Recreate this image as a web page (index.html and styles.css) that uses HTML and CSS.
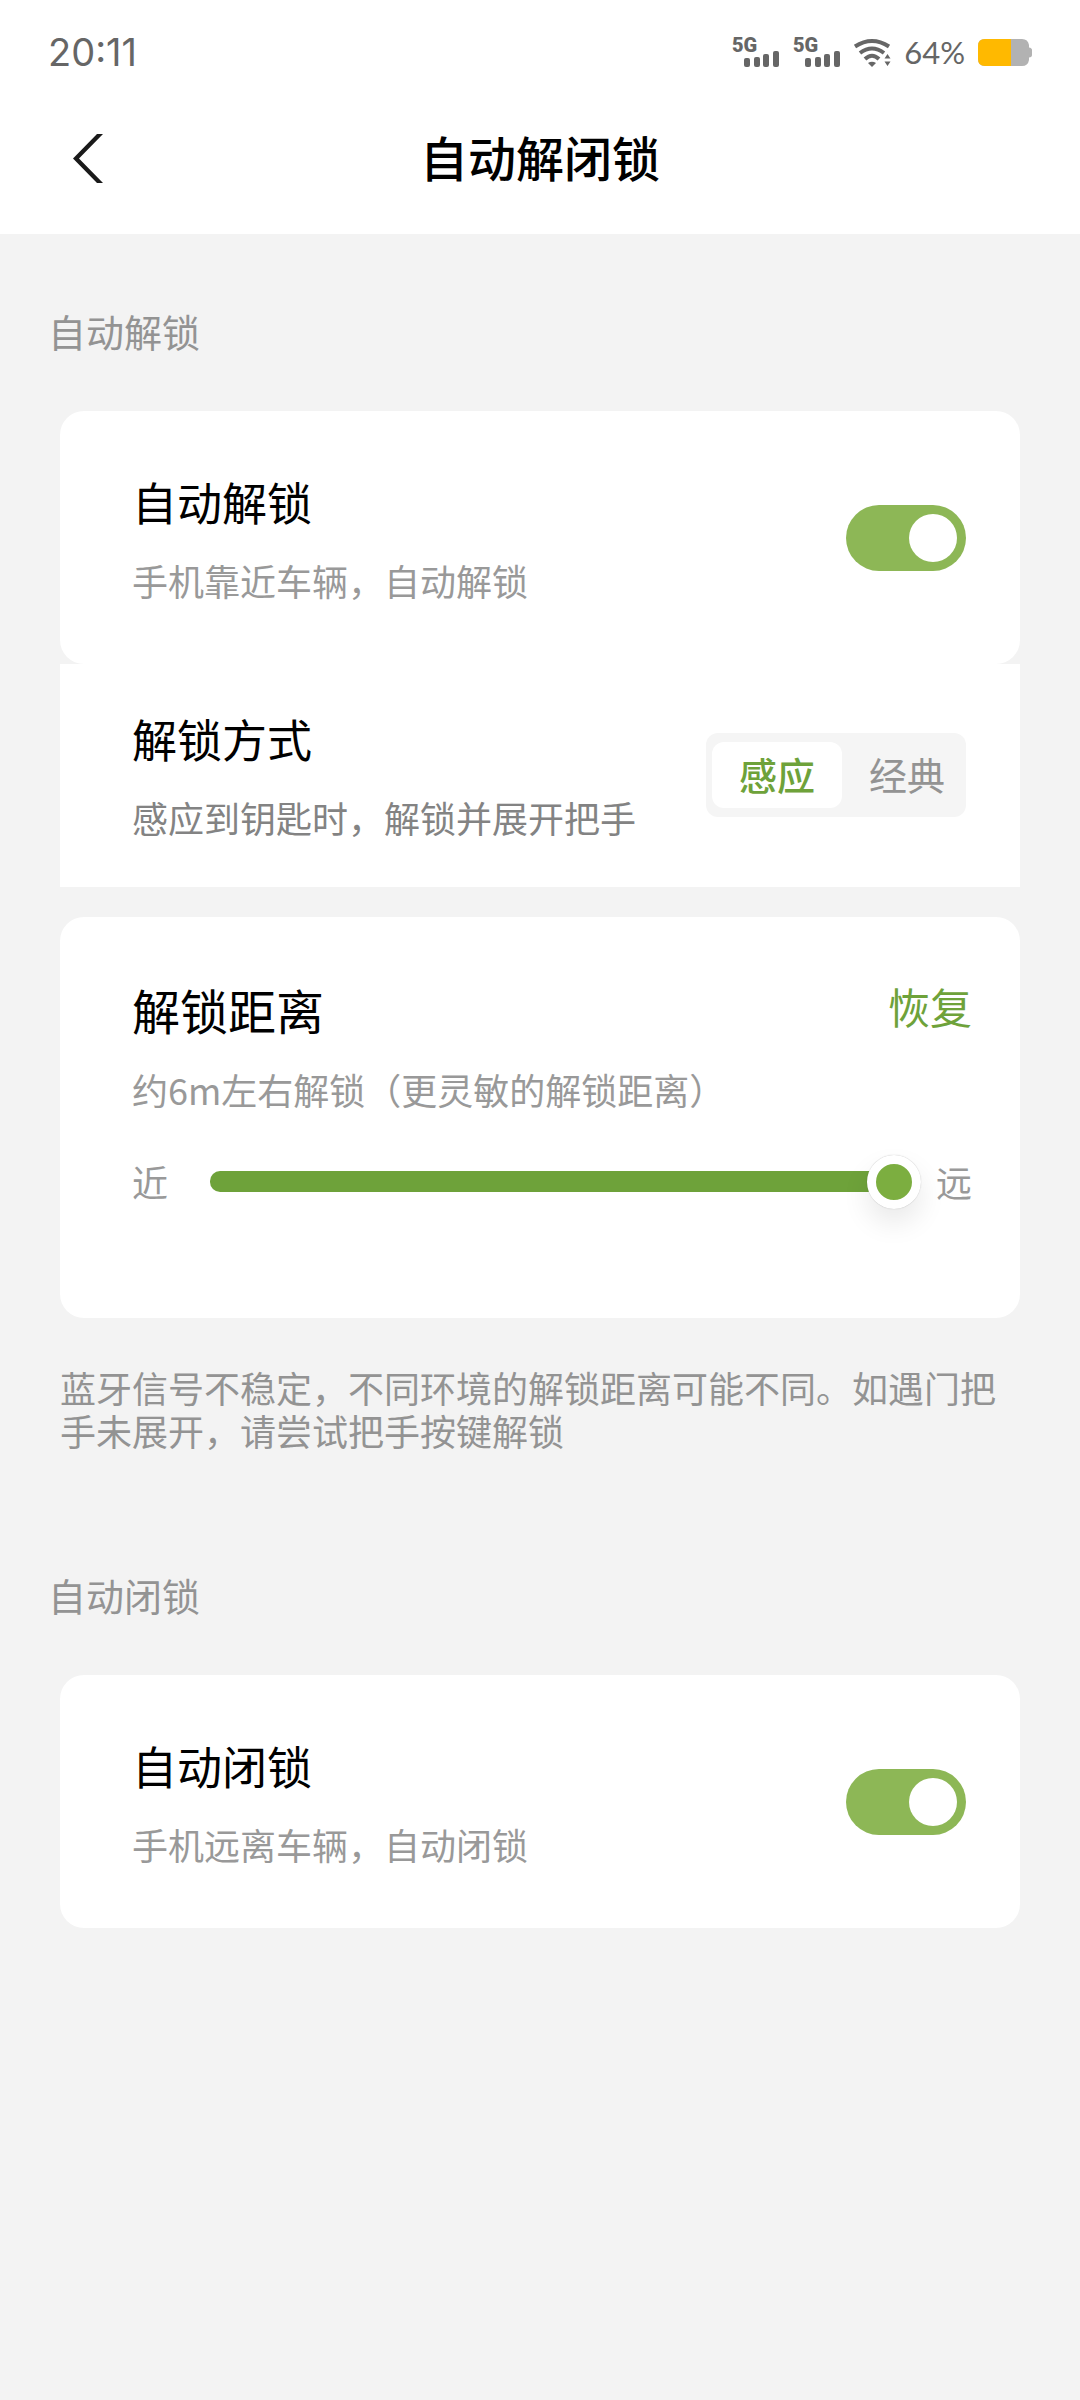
FILE: index.html
```html
<!DOCTYPE html>
<html lang="zh-CN">
<head>
    <meta charset="UTF-8">
    <meta name="viewport" content="width=device-width, initial-scale=1.0">
    <title>自动解闭锁</title>
    <link rel="stylesheet" href="styles.css">
</head>
<body>

<header class="top">
    <div class="status-bar">
        <span class="clock">20:11</span>
        <div class="status-icons">
            <svg class="signal" viewBox="0 0 48 36" width="48" height="36" role="img" aria-label="5G">
                <text class="signal-text" x="1" y="18">5G</text>
                <rect x="13" y="24" width="6" height="9" rx="2"/>
                <rect x="23" y="23" width="6" height="10" rx="2"/>
                <rect x="32" y="20" width="6" height="13" rx="2"/>
                <rect x="42" y="17" width="6" height="16" rx="2"/>
            </svg>
            <svg class="signal" viewBox="0 0 48 36" width="48" height="36" role="img" aria-label="5G">
                <text class="signal-text" x="1" y="18">5G</text>
                <rect x="13" y="24" width="6" height="9" rx="2"/>
                <rect x="23" y="23" width="6" height="10" rx="2"/>
                <rect x="32" y="20" width="6" height="13" rx="2"/>
                <rect x="42" y="17" width="6" height="16" rx="2"/>
            </svg>
            <svg class="wifi" viewBox="0 0 38 30" width="38" height="30" role="img" aria-label="Wi-Fi">
                <g fill="none" stroke="#666666" stroke-width="4">
                    <path d="M2 9.500Q19 -1.500 36 9.500"/>
                    <path d="M7 16Q19 7 31 16"/>
                    <path d="M12 22Q19 15.500 26 22"/>
                </g>
                <path d="M15 26Q19 23.500 23 26L19 30Z" fill="#666666"/>
                <path d="M31.500 21.500L34.500 17L37.500 21.500ZM31.500 24.500L34.500 29L37.500 24.500Z" fill="#666666"/>
            </svg>
            <span class="battery-level">64%</span>
            <svg class="battery" viewBox="0 0 54 27" width="54" height="27" role="img" aria-label="电量">
                <path d="M7 0H44Q50 0 51 6V8.500Q54 9 54 11V16Q54 18 51 18.500V21Q50 27 44 27H7Q0 27 0 20V7Q0 0 7 0Z" fill="#b2b2b2"/>
                <path d="M7 0H33V27H7Q0 27 0 20V7Q0 0 7 0Z" fill="#ffb900"/>
            </svg>
        </div>
    </div>
    <div class="nav-bar">
        <button type="button" class="back-button" aria-label="返回">
            <svg viewBox="0 0 30 50" width="30" height="50">
                <path d="M24 0H30L6 24.500L30 49H24L0 24.500Z" fill="#1a1a1a"/>
            </svg>
        </button>
        <h1>自动解闭锁</h1>
    </div>
</header>

<main>
    <section>
        <h2>自动解锁</h2>

        <div class="card">
            <div class="card-text">
                <label class="card-title" for="auto-unlock">自动解锁</label>
                <p class="card-desc">手机靠近车辆，自动解锁</p>
            </div>
            <input type="checkbox" role="switch" class="switch" id="auto-unlock" checked>
        </div>

        <div class="card card-square">
            <div class="card-text">
                <h3 class="card-title">解锁方式</h3>
                <p class="card-desc card-desc-dark">感应到钥匙时，解锁并展开把手</p>
            </div>
            <div class="segmented" role="group" aria-label="解锁方式">
                <button type="button" class="segment active" aria-pressed="true">感应</button>
                <button type="button" class="segment" aria-pressed="false">经典</button>
            </div>
        </div>

        <div class="card card-distance">
            <div class="distance-header">
                <label class="card-title" for="distance">解锁距离</label>
                <button type="button" class="reset-button">恢复</button>
            </div>
            <p class="card-desc">约6m左右解锁（更灵敏的解锁距离）</p>
            <div class="slider-row">
                <span>近</span>
                <input type="range" class="slider" id="distance" min="1" max="6" value="6">
                <span>远</span>
            </div>
        </div>

        <p class="note">蓝牙信号不稳定，不同环境的解锁距离可能不同。如遇门把手未展开，请尝试把手按键解锁</p>
    </section>

    <section>
        <h2>自动闭锁</h2>

        <div class="card">
            <div class="card-text">
                <label class="card-title" for="auto-lock">自动闭锁</label>
                <p class="card-desc">手机远离车辆，自动闭锁</p>
            </div>
            <input type="checkbox" role="switch" class="switch" id="auto-lock" checked>
        </div>
    </section>
</main>

<script>
    document.querySelectorAll('.segment').forEach((button) => {
        button.addEventListener('click', () => {
            document.querySelectorAll('.segment').forEach((item) => {
                item.classList.toggle('active', item === button);
                item.setAttribute('aria-pressed', item === button);
            });
        });
    });
</script>

</body>
</html>
```
FILE: styles.css
```css
*,
*::before,
*::after {
    box-sizing: border-box;
    margin: 0;
    padding: 0;
}

:root {
    --bg-main: #f3f3f3;
    --bg-panel: #ffffff;
    --text-main: #000000;
    --text-muted: #999999;
    --text-status: #666666;
    --green: #6ea23a;
    --green-light: #8db756;
}

body {
    min-height: 100vh;
    font-family: "Noto Sans CJK SC", sans-serif;
    font-size: 36px;
    color: var(--text-main);
    background-color: var(--bg-main);
}

button {
    border: none;
    background: none;
    font-family: inherit;
    cursor: pointer;
}

/* Header */
.top {
    background-color: var(--bg-panel);
}

.status-bar {
    display: flex;
    justify-content: space-between;
    align-items: center;
    height: 84px;
    padding: 20px 48px 0;
    color: var(--text-status);
}

.clock {
    font-family: Inter, sans-serif;
    font-size: 38px;
}

.status-icons {
    display: flex;
    align-items: center;
    gap: 13px;
}

.signal {
    fill: var(--text-status);
}

.signal-text {
    font-family: Roboto, sans-serif;
    font-size: 20px;
    font-weight: 900;
}

.battery-level {
    font-family: Lato, sans-serif;
    font-size: 31px;
}

.nav-bar {
    display: grid;
    grid-template-columns: 1fr auto 1fr;
    align-items: center;
    height: 150px;
    padding: 0 73px;
}

.back-button {
    justify-self: start;
    line-height: 0;
}

h1 {
    padding-bottom: 6px;
    font-size: 48px;
    font-weight: 500;
    line-height: 66px;
}

/* Sections */
section {
    padding-top: 69px;
}

section + section {
    padding-top: 115px;
}

h2 {
    margin-bottom: 52px;
    padding: 0 48px;
    font-size: 38px;
    font-weight: 400;
    line-height: 56px;
    color: #939393;
}

/* Cards */
.card {
    display: flex;
    justify-content: space-between;
    align-items: center;
    margin: 0 60px;
    padding: 58px 54px 57px 72px;
    border-radius: 24px;
    background-color: var(--bg-panel);
}

.card-square {
    padding-top: 42px;
    padding-bottom: 43px;
    border-radius: 0;
}

.card-title {
    display: block;
    font-size: 45px;
    font-weight: 400;
    line-height: 66px;
}

.card-desc {
    margin-top: 18px;
    line-height: 54px;
    color: var(--text-muted);
}

.card-desc-dark {
    color: #838383;
}

/* Toggle switch */
.switch {
    appearance: none;
    display: flex;
    flex: none;
    justify-content: flex-start;
    align-items: center;
    width: 120px;
    height: 66px;
    padding: 9px;
    border-radius: 33px;
    background-color: #cccccc;
    cursor: pointer;
}

.switch::before {
    content: "";
    width: 48px;
    height: 48px;
    border-radius: 50%;
    background-color: #ffffff;
}

.switch:checked {
    justify-content: flex-end;
    background-color: var(--green-light);
}

/* Segmented control */
.segmented {
    display: flex;
    flex: none;
    width: 260px;
    padding: 9px 6px;
    border-radius: 12px;
    background-color: #f5f5f5;
}

.segment {
    flex: none;
    width: 130px;
    height: 66px;
    padding-bottom: 4px;
    border-radius: 12px;
    font-size: 38px;
    color: #939393;
}

.segment.active {
    font-weight: 500;
    color: var(--green);
    background-color: #ffffff;
}

/* Unlock distance */
.card-distance {
    display: block;
    margin-top: 30px;
    padding: 62px 48px 110px 72px;
}

.card-distance .card-title {
    font-size: 48px;
    line-height: 60px;
}

.card-distance .card-desc {
    margin-top: 23px;
}

.distance-header {
    display: flex;
    justify-content: space-between;
}

.reset-button {
    font-size: 42px;
    line-height: 54px;
    align-self: flex-start;
    color: var(--green);
}

.slider-row {
    display: flex;
    align-items: center;
    margin-top: 38px;
    line-height: 54px;
    color: var(--text-muted);
}

.slider {
    appearance: none;
    flex: 1;
    min-width: 0;
    height: 54px;
    margin: 0 15px 0 42px;
    background: none;
    cursor: pointer;
}

.slider::-webkit-slider-runnable-track {
    height: 21px;
    border-radius: 10px;
    background: linear-gradient(var(--green), var(--green)) left / calc(100% - 27px) no-repeat;
}

.slider::-webkit-slider-thumb {
    appearance: none;
    width: 54px;
    height: 54px;
    margin-top: -16px;
    border: 9px solid #ffffff;
    border-radius: 50%;
    background: #7cae40;
    box-shadow: 0 14px 28px rgba(0, 0, 0, 0.09), 0 0 1px rgba(0, 0, 0, 0.3);
}

.note {
    padding: 48px 60px 0;
    line-height: 43px;
    color: #939393;
}
```
